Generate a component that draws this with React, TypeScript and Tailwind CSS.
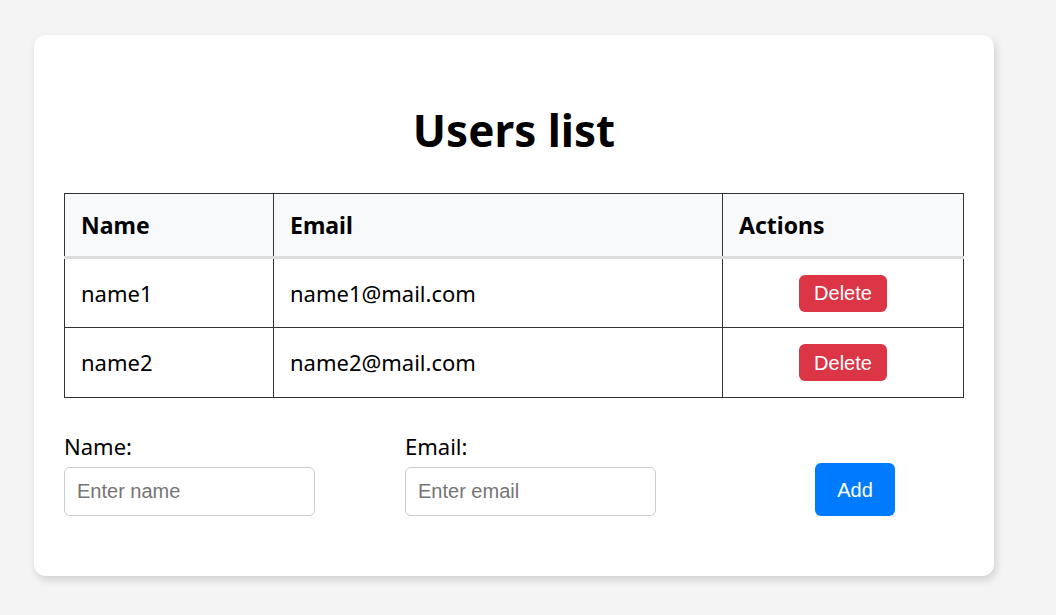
const users = [
  { name: "name1", email: "name1@mail.com" },
  { name: "name2", email: "name2@mail.com" },
];

export default function App() {
  return (
    <div className="min-h-[615px] bg-[#f4f4f4] pt-[35px] pl-[34px] font-['Segoe_UI','Noto_Sans',sans-serif] text-black">
      <div className="w-[960px] rounded-[12px] bg-white px-[30px] pt-[66px] pb-[60px] shadow-[2px_4px_8px_rgba(0,0,0,0.15)]">
        <h1 className="mb-[34px] text-center text-[44px] font-bold leading-[58px]">Users list</h1>

        <table className="w-[899px] table-fixed border-collapse">
          <thead>
            <tr className="bg-[#f8f9fa]">
              <th className="h-[64px] w-[209px] border border-[#333] border-b-[3px] border-b-[#ddd] px-4 text-left text-[23px] font-bold">Name</th>
              <th className="h-[64px] w-[449px] border border-[#333] border-b-[3px] border-b-[#ddd] px-4 text-left text-[23px] font-bold">Email</th>
              <th className="h-[64px] w-[241px] border border-[#333] border-b-[3px] border-b-[#ddd] px-4 text-left text-[23px] font-bold">Actions</th>
            </tr>
          </thead>
          <tbody>
            {users.map((u) => (
              <tr key={u.name}>
                <td className="h-[70px] border border-[#333] px-4 text-[22px]">{u.name}</td>
                <td className="h-[70px] border border-[#333] px-4 text-[22px]">{u.email}</td>
                <td className="h-[70px] border border-[#333] px-4 text-center">
                  <button className="h-[37px] w-[88px] rounded-[6px] bg-[#dc3545] font-['Liberation_Sans',Arial,sans-serif] text-[20px] text-white">
                    Delete
                  </button>
                </td>
              </tr>
            ))}
          </tbody>
        </table>

        {/* add user form */}
        <div className="mt-[33px] flex items-end">
          <div className="flex w-[251px] flex-col gap-[6px]">
            <label className="text-[22px] leading-[30px]">Name:</label>
            <input
              placeholder="Enter name"
              className="h-[49px] rounded-[6px] border border-[#ccc] px-3 font-['Liberation_Sans',Arial,sans-serif] text-[20px] placeholder:text-[#757575] outline-none"
            />
          </div>
          <div className="ml-[90px] flex w-[251px] flex-col gap-[6px]">
            <label className="text-[22px] leading-[30px]">Email:</label>
            <input
              placeholder="Enter email"
              className="h-[49px] rounded-[6px] border border-[#ccc] px-3 font-['Liberation_Sans',Arial,sans-serif] text-[20px] placeholder:text-[#757575] outline-none"
            />
          </div>
          <button className="ml-[159px] h-[53px] w-[80px] rounded-[6px] bg-[#007bff] font-['Liberation_Sans',Arial,sans-serif] text-[20px] text-white">
            Add
          </button>
        </div>
      </div>
    </div>
  );
}
